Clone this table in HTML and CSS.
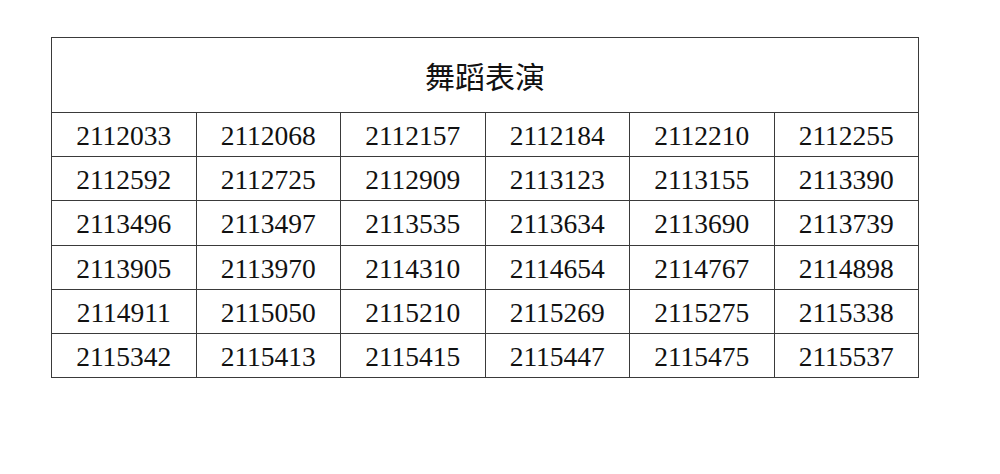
FILE: index.html
```html
<!DOCTYPE html>
<html>
<head>
<meta charset="utf-8">
<link rel="stylesheet" href="styles.css">
</head>
<body>
<table class="grid">
  <tr><th colspan="6" class="title">舞蹈表演</th></tr>
  <tr><td>2112033</td><td>2112068</td><td>2112157</td><td>2112184</td><td>2112210</td><td>2112255</td></tr>
  <tr><td>2112592</td><td>2112725</td><td>2112909</td><td>2113123</td><td>2113155</td><td>2113390</td></tr>
  <tr><td>2113496</td><td>2113497</td><td>2113535</td><td>2113634</td><td>2113690</td><td>2113739</td></tr>
  <tr><td>2113905</td><td>2113970</td><td>2114310</td><td>2114654</td><td>2114767</td><td>2114898</td></tr>
  <tr><td>2114911</td><td>2115050</td><td>2115210</td><td>2115269</td><td>2115275</td><td>2115338</td></tr>
  <tr><td>2115342</td><td>2115413</td><td>2115415</td><td>2115447</td><td>2115475</td><td>2115537</td></tr>
</table>
</body>
</html>
```
FILE: styles.css
```css
html, body {
  margin: 0;
  padding: 0;
  background: #fff;
}
body {
  padding: 37px 0 0 51px;
}
.grid {
  border-collapse: collapse;
  width: 868px;
  table-layout: fixed;
  color: #111;
}
.grid th, .grid td {
  border: 1.5px solid #3a3a3a;
  padding: 0;
  text-align: center;
}
.title {
  height: 74px;
  padding-bottom: 4px;
  font-family: "Noto Sans CJK SC", sans-serif;
  font-weight: normal;
  font-size: 30px;
}
.grid td {
  box-sizing: border-box;
  height: 44.2px;
  padding-top: 3px;
  line-height: 28px;
  font-family: "Liberation Serif", serif;
  font-size: 27.5px;
}
```
